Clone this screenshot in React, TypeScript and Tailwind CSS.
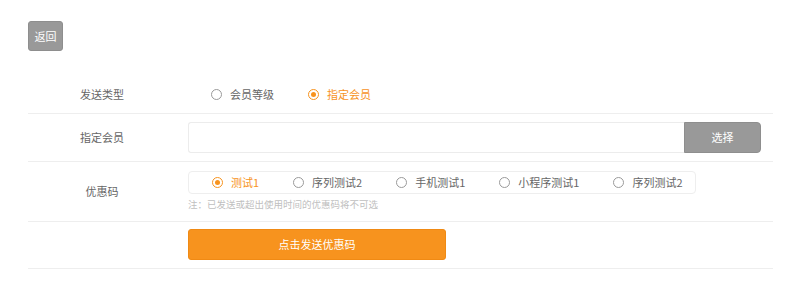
import React from "react";

const ORANGE = "#f7931e";

function Radio({ label, checked }: { label: string; checked?: boolean }) {
  return (
    <div className="flex items-center pl-[23px] pr-[11px]">
      <span
        className={
          "flex h-[11px] w-[11px] items-center justify-center rounded-full border " +
          (checked ? "border-[#f7931e]" : "border-[#9a9a9a]")
        }
      >
        {checked && <span className="h-[5px] w-[5px] rounded-full bg-[#f7931e]" />}
      </span>
      <span className={"ml-[8px] text-[11px] leading-none " + (checked ? "text-[#f7931e]" : "text-[#666]")}>
        {label}
      </span>
    </div>
  );
}

function Row({ label, children, className }: { label: string; children: React.ReactNode; className?: string }) {
  return (
    <div className={"flex border-b border-[#eeeeee] " + (className ?? "")}>
      <div className="flex w-[148px] items-center justify-center text-[11px] text-[#666]">{label}</div>
      <div className="ml-3 flex-1 pr-3">{children}</div>
    </div>
  );
}

export default function App() {
  return (
    <div
      className="h-[299px] w-[800px] bg-white pl-[28px] pr-[27px] pt-[21px]"
      style={{ fontFamily: '"Noto Sans CJK SC", "Noto Sans", sans-serif' }}
    >
      <button className="flex h-[30px] w-[35px] items-center justify-center rounded-[3px] border border-[#8e8e8e] bg-[#999] text-[11px] text-white">
        返回
      </button>
      <div className="mt-[24px]">
        <Row label="发送类型" className="h-[39px]">
          <div className="flex h-full items-center">
            <Radio label="会员等级" />
            <Radio label="指定会员" checked />
          </div>
        </Row>
        <Row label="指定会员" className="py-[8px]">
          <div className="flex h-[31px]">
            <input className="flex-1 rounded-l-[3px] border border-r-0 border-[#ececec] outline-none" />
            <button className="flex w-[77px] items-center justify-center rounded-r-[4px] border border-[#8e8e8e] bg-[#999] text-[11px] text-white">
              选择
            </button>
          </div>
        </Row>
        <Row label="优惠码" className="pt-[9px] pb-[9px]">
          <div className="flex h-[23px] w-[508px] items-center rounded-[4px] border border-[#eeeeee]">
            <Radio label="测试1" checked />
            <Radio label="序列测试2" />
            <Radio label="手机测试1" />
            <Radio label="小程序测试1" />
            <Radio label="序列测试2" />
          </div>
          <div className="mt-[2px] text-[9.5px] leading-[16px] text-[#c0c0c0]">注：已发送或超出使用时间的优惠码将不可选</div>
        </Row>
        <Row label="" className="pt-[7px] pb-[8px]">
          <button
            className="flex h-[31px] w-[258px] items-center justify-center rounded-[3px] border border-[#f08a14] text-[11px] text-white"
            style={{ backgroundColor: ORANGE }}
          >
            点击发送优惠码
          </button>
        </Row>
      </div>
    </div>
  );
}
